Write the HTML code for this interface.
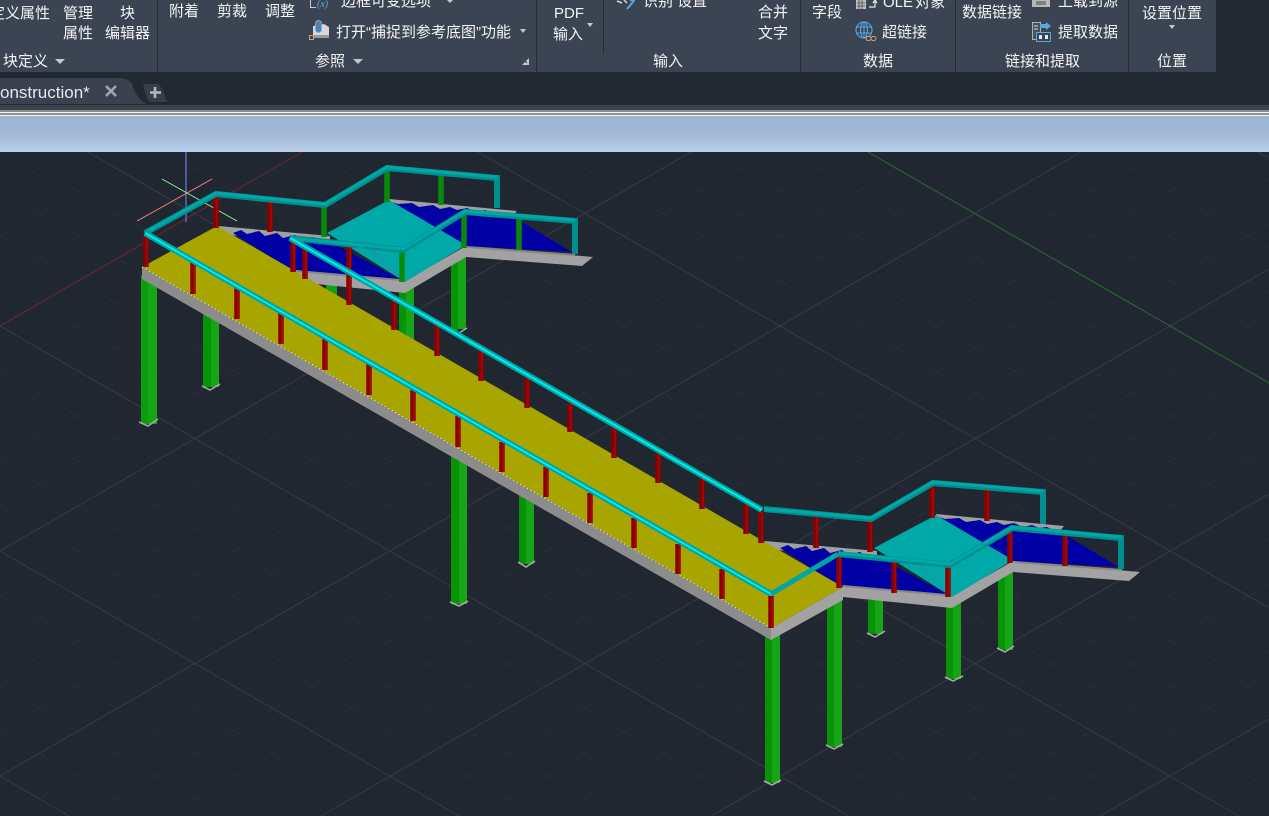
<!DOCTYPE html>
<html lang="zh-CN"><head><meta charset="utf-8"><title>Construction</title>
<style>
html,body{margin:0;padding:0;width:1269px;height:816px;overflow:hidden;background:#212730}
svg{display:block}
text{font-family:"Liberation Sans","Noto Sans CJK SC",sans-serif;font-size:15px;fill:#f4f4f4}
</style></head><body>
<svg xmlns="http://www.w3.org/2000/svg" width="1269" height="816" viewBox="0 0 1269 816">
<defs>
<linearGradient id="sky" x1="0" y1="0" x2="0" y2="1"><stop offset="0" stop-color="#9bb4d2"/><stop offset=".55" stop-color="#a2bad7"/><stop offset="1" stop-color="#b9d1ea"/></linearGradient>
<g id="land">
<polygon points="218,226 330,236 330,243 218,234" fill="#a0a0a0"/>
<polygon points="389,199 517,211 512,217 392,207" fill="#a0a0a0"/>
<polygon points="296,270 405,281 466,246 593,257 582,266 466,257 405,293 296,282" fill="#a2a2a2"/>
<polygon points="233,233 241,230 247,234 259,231 265,236 277,233 283,238 295,235 301,240 313,237 319,241 327,240 400,279 296,270 285,266" fill="#0000a4"/>
<polygon points="392,202 398,204 412,203 419,207 433,205 440,209 450,207 457,210 467,208 476,212 485,210 492,213 500,212 506,215 522,222 572,252 467,246 450,238" fill="#0000a4"/>
<path d="M296 271L400 280M467 247L575 255" stroke="#868686" stroke-width="2" fill="none"/>
<polygon points="389,200 327,233 405,282 466,245" fill="#00a8a8"/>
<path d="M363 240L400 278" stroke="#d020d0" stroke-width="1" fill="none" stroke-dasharray="1 3"/>
</g>
</defs>

<!-- viewport -->
<rect x="0" y="152" width="1269" height="664" fill="#212730"/>
<path fill="none" stroke="#272d36" stroke-width="1" d="M1258 152L1269 158M1180 152L1269 203M1102 152L1269 248M1024 152L1269 293M946 152L1269 338M790 152L1269 428M712 152L1269 473M634 152L1269 518M556 152L1269 563M400 152L1269 653M322 152L1269 698M244 152L1269 743M166 152L1269 788M10 152L1161 816M0 191L1083 816M0 236L1005 816M0 281L927 816M0 371L771 816M0 416L693 816M0 461L615 816M0 506L537 816M0 596L381 816M0 641L303 816M0 686L225 816M0 731L147 816
M0 191L68 152M0 236L146 152M0 281L224 152M0 371L380 152M0 416L458 152M0 461L536 152M0 506L613 152M0 596L769 152M0 641L847 152M0 686L925 152M0 731L1003 152M9 816L1159 152M87 816L1237 152M165 816L1269 179M243 816L1269 224M399 816L1269 314M477 816L1269 359M555 816L1269 404M633 816L1269 449M789 816L1269 539M867 816L1269 584M944 816L1269 629M1022 816L1269 674M1178 816L1269 764M1256 816L1269 809"/>
<path fill="none" stroke="#363c47" stroke-width="1" d="M1258 152L1269 158M478 152L1269 608M88 152L1239 816M0 326L849 816M0 551L459 816M0 776L69 816M0 551L691 152M0 776L1081 152M321 816L1269 269M711 816L1269 494M1100 816L1269 719"/>
<path d="M0 326L302 152" stroke="#6b2a30" stroke-width="1" fill="none"/>
<path d="M868 152L1269 383" stroke="#2a6a32" stroke-width="1" fill="none"/>
<path d="M186 152V222" stroke="#8484ff" stroke-width="1"/>
<path d="M137 221L212 179" stroke="#ff8484" stroke-width="1"/>
<path d="M162 179L237 221" stroke="#84ff84" stroke-width="1"/>

<!-- rear columns -->
<g shape-rendering="crispEdges">
<rect x="326" y="285" width="11" height="12" fill="#14a014"/>
<rect x="399" y="285" width="7" height="60" fill="#069406"/><rect x="406" y="285" width="8" height="60" fill="#16a516"/>
<rect x="451" y="255" width="7" height="76" fill="#069406"/><rect x="458" y="255" width="8" height="74" fill="#16a516"/>
<rect x="868" y="600" width="7" height="34" fill="#069406"/><rect x="875" y="600" width="8" height="34" fill="#16a516"/>
<rect x="946" y="600" width="7" height="79" fill="#069406"/><rect x="953" y="600" width="8" height="79" fill="#16a516"/>
<rect x="998" y="570" width="7" height="80" fill="#069406"/><rect x="1005" y="570" width="8" height="80" fill="#16a516"/>
<rect x="141" y="275" width="7" height="149" fill="#0c9c0c"/><rect x="148" y="275" width="9" height="149" fill="#16a516"/>
<rect x="203" y="310" width="8" height="77" fill="#069406"/><rect x="211" y="310" width="8" height="77" fill="#16a516"/>
<rect x="451" y="455" width="8" height="149" fill="#069406"/><rect x="459" y="455" width="8" height="149" fill="#16a516"/>
<rect x="519" y="490" width="7" height="74" fill="#069406"/><rect x="526" y="490" width="8" height="74" fill="#16a516"/>
<rect x="765" y="630" width="7" height="153" fill="#069406"/><rect x="772" y="630" width="8" height="153" fill="#16a516"/>
<rect x="827" y="595" width="7" height="152" fill="#069406"/><rect x="834" y="595" width="8" height="152" fill="#16a516"/>
</g>
<g fill="none" stroke="#a8a8a8" stroke-width="1.6">
<path d="M139 422L148 426L158 419"/><path d="M202 386L210 390L220 384"/><path d="M450 602L459 606L468 601"/><path d="M518 562L526 567L535 561"/><path d="M764 781L772 785L781 780"/><path d="M826 745L834 749L843 744"/><path d="M867 633L875 637L885 631"/><path d="M945 677L953 681L963 676"/><path d="M997 648L1005 652L1014 646"/><path d="M451 330L459 333L467 328"/>
</g>

<!-- landings -->
<use href="#land"/>
<use href="#land" x="547" y="315"/>

<!-- ramp -->
<polygon points="142,267 771,628 771,640 142,279" fill="#8c8c8c"/>
<polygon points="771,628 843,587 843,600 771,640" fill="#a2a2a2"/>
<polygon points="142,267 217,226 843,587 771,628" fill="#a8a400"/>
<path d="M142 267L771 628" stroke="#fff" stroke-width="1" stroke-dasharray="1 3" fill="none"/>

<!-- posts -->
<path stroke="#8a0000" stroke-width="5.500" fill="none" d="M146 235V267M193 262V294M237 288V319M281 313V344M325 339V370M369 364V395M413 390V421M458 416V447M502 442V472M546 467V497M590 493V523M634 518V548M678 544V574M722 569V599M771 596V628M293 240V272M305 248V279M349 247V305M394 298V330M437 324V356M481 350V381M527 378V408M570 403V432M614 428V458M658 453V483M702 479V509M746 504V534M761 512V543M216 196V228M270 201V232M816 516V548M870 520V552M932 485V518M987 489V521M839 556V588M894 561V593M948 565V597M1010 530V563M1065 534V566"/>
<path stroke="#a80808" stroke-width="1.400" fill="none" d="M147 235V267M194 262V294M238 288V319M282 313V344M326 339V370M370 364V395M414 390V421M459 416V447M503 442V472M547 467V497M591 493V523M635 518V548M679 544V574M723 569V599M772 596V628M294 240V272M306 248V279M350 247V305M395 298V330M438 324V356M482 350V381M528 378V408M571 403V432M615 428V458M659 453V483M703 479V509M747 504V534M762 512V543M217 196V228M271 201V232M817 516V548M871 520V552M933 485V518M988 489V521M840 556V588M895 561V593M949 565V597M1011 530V563M1066 534V566"/>
<path stroke="#088a08" stroke-width="5.500" fill="none" d="M324 205V237M387 169V202M441 173V205M402 250V282M464 214V248M519 218V250"/>

<!-- rails -->
<g fill="none" stroke-linejoin="miter">
<path stroke="#008f8f" stroke-width="6" d="M145 233L216 194L325 205L387 168L497 178V208M290 238L403 250L465 212L575 221V254M764 509L871 519L933 483L1043 492V524M838 554L950 565L1012 528L1121 538V569"/>
<path stroke="#00a8a8" stroke-width="3" d="M145 233L216 193L325 204L387 167L497 177M290 238L403 249L465 211L575 220M764 509L871 518L933 482L1043 491M838 553L950 564L1012 527L1121 537"/>
<path stroke="#00a6a6" stroke-width="5" d="M771 594L838 554"/>
<path stroke="#00a4a4" stroke-width="6" d="M145 233L771 594M290 238L762 510"/>
<path stroke="#00ecec" stroke-width="2" d="M145 233L771 594M290 238L762 510"/>
</g>

<!-- chrome -->
<rect x="0" y="0" width="1269" height="105" fill="#222933"/>
<rect x="0" y="0" width="1216" height="72" fill="#3b4453"/>
<path d="M157.500 0V72M536.500 0V72M800.500 0V72M955.500 0V72M1128.500 0V72" stroke="#262d37" stroke-width="1" fill="none"/>
<path d="M603.500 0V54" stroke="#262d37" stroke-width="1"/>
<path d="M0 78H118Q128 78 132 84Q136 98 146 104H0Z" fill="#3a4250"/>
<path d="M143 84H158Q163 88 166 100L168 102H150Q146 98 143 84Z" fill="#363e4b"/>
<rect x="0" y="105" width="1269" height="5" fill="#3a4250"/>
<rect x="0" y="110" width="1269" height="2" fill="#8c8c8c"/>
<rect x="0" y="112" width="1269" height="1.500" fill="#f4f4f4"/>
<rect x="0" y="113.500" width="1269" height="1" fill="#2a2f38"/>
<rect x="0" y="114.500" width="1269" height="1.500" fill="#f4f4f4"/>
<rect x="0" y="116" width="1269" height="36" fill="url(#sky)"/>

<!-- text -->
<text x="-10" y="18">定义属性</text>
<text x="63" y="18">管理</text><text x="63" y="38">属性</text>
<text x="120" y="18">块</text><text x="105" y="38">编辑器</text>
<text x="3" y="66">块定义</text>
<text x="169" y="16">附着</text><text x="217" y="16">剪裁</text><text x="265" y="16">调整</text>
<text x="336" y="6">“边框可变选项”</text>
<text x="336" y="37">打开“捕捉到参考底图”功能</text>
<text x="315" y="66">参照</text>
<text x="554" y="18">PDF</text><text x="553" y="39">输入</text>
<text x="643" y="6">识别 设置</text>
<text x="758" y="17">合并</text><text x="758" y="38">文字</text>
<text x="653" y="66">输入</text>
<text x="812" y="17">字段</text>
<text x="883" y="7" word-spacing="-2">OLE 对象</text>
<text x="882" y="37">超链接</text>
<text x="863" y="66">数据</text>
<text x="962" y="17">数据链接</text>
<text x="1058" y="6">上载到源</text>
<text x="1058" y="37">提取数据</text>
<text x="1005" y="66">链接和提取</text>
<text x="1142" y="18">设置位置</text>
<text x="1157" y="66">位置</text>
<text x="0" y="98" style="font-size:17px;fill:#e4e8ee">onstruction*</text>

<!-- arrows -->
<g fill="#c4c8ce">
<polygon points="55,59 65,59 60,64"/><polygon points="353,59 363,59 358,64"/>
<polygon points="587,23 593,23 590,27"/><polygon points="520,29 526,29 523,33"/>
<polygon points="447,0 453,0 450,3"/><polygon points="1169,25 1175,25 1172,29"/>
<polygon points="529,58 529,65 522,65"/>
</g>
<path d="M523 59L527 63" stroke="#3b4453" stroke-width="1.200"/>

<!-- tab controls -->
<path d="M106 86L116 96M116 86L106 96" stroke="#a4a8ae" stroke-width="2.600"/>
<path d="M155 87V98M150 92.500H161" stroke="#b4b8be" stroke-width="2.600"/>

<!-- icons -->
<path d="M310.500 0V7.500H316" stroke="#c8ccd0" stroke-width="1" fill="none"/>
<text x="317" y="7" style="font-family:'Liberation Serif',serif;font-size:10px;font-style:italic;fill:#5aa8e0">(x)</text>
<polygon points="313,26 324,24 329,27 329,37 313,37" fill="#d8d8d8"/>
<rect x="313" y="35" width="16" height="3" fill="#9a9a9a"/>
<rect x="315.500" y="20.500" width="6" height="12" rx="3" fill="#5b7d9e" stroke="#6cb4ec" stroke-width="1"/>
<rect x="309.500" y="35.500" width="4" height="4" fill="none" stroke="#d8a070" stroke-width="1"/>

<polygon points="856,0 866,0 866,9 856,9" fill="#c0c0c0"/>
<path d="M857 3H865M857 6H865M859 0V9M862 0V9" stroke="#5a5f68" stroke-width="1"/>
<path d="M869 7H875V1M873 3L875 0L877 3" stroke="#e8e8e8" stroke-width="1.200" fill="none"/>
<g fill="none" stroke="#5aa8e0" stroke-width="1.100">
<circle cx="864" cy="30" r="8"/><ellipse cx="864" cy="30" rx="3.500" ry="8"/><path d="M856 27H872M856 33H872M864 22V38"/>
</g>
<rect x="866" y="36.500" width="5" height="4" rx="2" fill="#3b4453" stroke="#d8a070"/>
<rect x="871" y="36.500" width="5" height="4" rx="2" fill="#3b4453" stroke="#d8a070"/>

<rect x="1032" y="0" width="18" height="7" fill="#b8b8b8"/><path d="M1036 1H1046V5H1036Z" fill="#7a8088"/>
<rect x="1032.500" y="22.500" width="8" height="17" fill="#4a5260" stroke="#b0b0b0"/>
<path d="M1034 26H1038M1034 29H1038" stroke="#d8d8d8"/>
<polygon points="1040,24 1046,24 1046,22 1051,26 1046,30 1046,28 1040,28" fill="#5aa8e0"/>
<rect x="1036.500" y="32.500" width="14" height="9" fill="#3b4453" stroke="#5aa8e0"/>
<rect x="1039" y="35" width="3" height="4" fill="#e8e8e8"/><rect x="1045" y="35" width="3" height="4" fill="#e8e8e8"/>

<path d="M617 1L622 3M624 0L627 3" stroke="#d8d8d8" stroke-width="1.500" fill="none"/>
<path d="M627 9L633 2M630 0L635 1" stroke="#5aa8e0" stroke-width="2" fill="none"/>
</svg>
</body></html>
